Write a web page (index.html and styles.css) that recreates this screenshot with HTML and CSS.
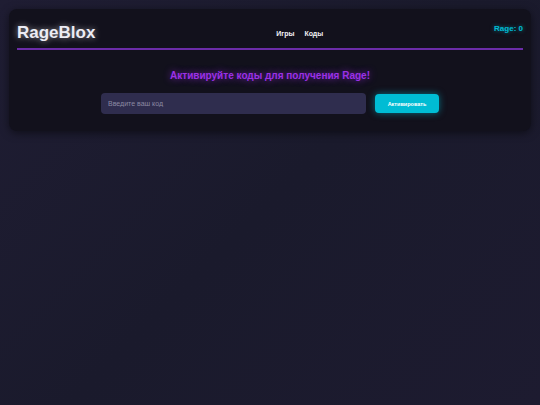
FILE: index.html
```html
<!DOCTYPE html>
<html lang="ru">
  <head>
    <title>RageBlox</title>
    <meta charset="utf-8">
    <link rel="stylesheet" href="styles.css">
  </head>
  <body>
    <div class="card">
      <div class="header">
        <div class="logo">RageBlox</div>
        <div class="nav">
          <a href="#">Игры</a>
          <a href="#">Коды</a>
        </div>
        <div class="balance">Rage: <span id="rage">0</span></div>
      </div>
      <div class="codes">
        <h2>Активируйте коды для получения Rage!</h2>
        <div class="code-row">
          <input type="text" placeholder="Введите ваш код">
          <button>Активировать</button>
        </div>
      </div>
    </div>
  </body>
</html>
```

FILE: styles.css
```css
html, body{
  height: 100%;
}
body{
  margin: 0;
  padding: 9px;
  box-sizing: border-box;
  font-family: "Liberation Sans", Arial, sans-serif;
  background: linear-gradient(135deg, #1f1d33 0%, #1a1a2c 50%, #1d1b30 100%);
  color: #fff;
}
.card{
  background-color: #12111c;
  border-radius: 8px;
  padding: 0 8px 17px;
  box-shadow: 0 2px 8px rgba(0, 0, 0, 0.5);
}
.header{
  display: flex;
  justify-content: space-between;
  align-items: flex-start;
  padding: 14px 0 5px;
  border-bottom: 2px solid #6b2ca8;
}
.logo{
  font-size: 17px;
  font-weight: bold;
  color: #ececf4;
  text-shadow: 0 0 6px rgba(255, 255, 255, 0.55);
}
.nav{
  display: flex;
  gap: 10px;
  align-self: center;
  margin-left: 10px;
}
.nav a{
  font-size: 7px;
  font-weight: bold;
  color: #f2f2f6;
  text-decoration: none;
}
.balance{
  font-size: 8px;
  font-weight: bold;
  color: #00bcd4;
  text-shadow: 0 0 4px rgba(0, 188, 212, 0.6);
  margin-top: 1px;
}
.codes{
  text-align: center;
  padding-top: 20px;
}
.codes h2{
  margin: 0 0 12px;
  font-size: 10px;
  color: #9b30e6;
  text-shadow: 0 0 7px rgba(155, 48, 230, 0.75);
}
.code-row{
  display: flex;
  justify-content: center;
  align-items: center;
  gap: 9px;
}
.code-row input{
  width: 265px;
  height: 21px;
  box-sizing: border-box;
  padding: 0 7px;
  border: none;
  border-radius: 4px;
  background-color: #2f2d4e;
  color: #fff;
  font-family: inherit;
  font-size: 7px;
  outline: none;
}
.code-row input::placeholder{
  color: #8b89a2;
}
.code-row button{
  width: 64px;
  height: 19px;
  border: none;
  border-radius: 4px;
  background-color: #00bcd4;
  color: #fff;
  font-family: inherit;
  font-size: 5.5px;
  font-weight: bold;
  box-shadow: 0 0 7px rgba(0, 188, 212, 0.55);
  cursor: pointer;
}
```
